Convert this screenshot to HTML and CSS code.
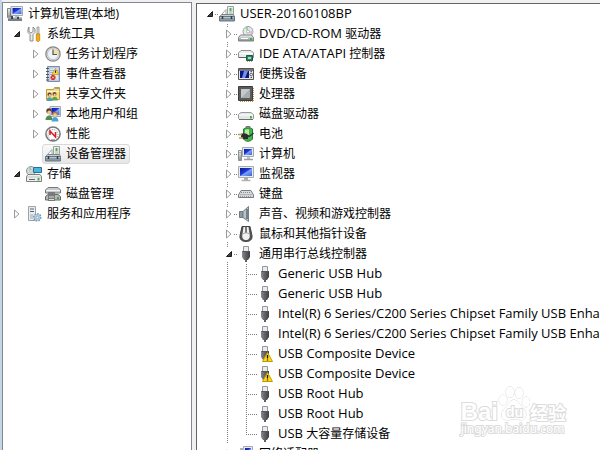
FILE: index.html
```html
<!DOCTYPE html>
<html lang="zh-CN">
<head>
    <meta charset="UTF-8">
    <meta name="viewport" content="width=device-width, initial-scale=1.0">
    <title>计算机管理</title>
    <link rel="stylesheet" href="styles.css">
</head>
<body>
    <!-- icon set -->
    <svg class="sprites" aria-hidden="true">
        <defs>
            <linearGradient id="steel" x1="0" y1="0" x2="0" y2="1">
                <stop offset="0" stop-color="#f4f6f6"/>
                <stop offset="1" stop-color="#858d91"/>
            </linearGradient>
            <linearGradient id="screen" x1="0" y1="0" x2="1" y2="1">
                <stop offset="0" stop-color="#0a1a9c"/>
                <stop offset=".45" stop-color="#2039d8"/>
                <stop offset=".55" stop-color="#7da4f2"/>
                <stop offset="1" stop-color="#3c5fe0"/>
            </linearGradient>
            <linearGradient id="plug" x1="0" y1="0" x2="1" y2="0">
                <stop offset="0" stop-color="#8b8b90"/>
                <stop offset=".4" stop-color="#66666b"/>
                <stop offset="1" stop-color="#3e3e42"/>
            </linearGradient>
        </defs>
        <symbol id="closed" viewBox="0 0 9 14">
            <path d="M2.5 3v8l4.500-4z" fill="#fff" stroke="#9a9a9a"/>
        </symbol>
        <symbol id="open" viewBox="0 0 9 14">
            <path d="M7.500 4.500v5h-5z" fill="#404040" stroke="#1c1c1c"/>
        </symbol>
        <symbol id="computer" viewBox="0 0 16 16">
            <path d="M4 .5h11.5v9H4z" fill="#e8eaee" stroke="#a5a9b2"/>
            <path d="M5.500 2h9v6h-9z" fill="url(#screen)"/>
            <path d="M8 10h4v1.500H8z" fill="#b8bcc2"/>
            <path d="M.5 2.500h3v9h-3z" fill="url(#steel)" stroke="#7b8287"/>
            <path d="M1 11.500h14v3.500H1z" fill="#777f84"/>
            <path d="M1 11.500h14v1H1z" fill="#c4cacc"/>
            <path d="M4 10h2v3H4zM10 11h2v2h-2z" fill="#41484c"/>
        </symbol>
        <symbol id="tools" viewBox="0 0 16 16">
            <path d="M3 1v4.500L5 7l2-1.500V1l2 2v3.500l-2 2V15H4V8.500l-2-2V3z" fill="#e8eaea" stroke="#777" stroke-width=".8"/>
            <path d="M11 1h2v7h-2z" fill="#ddd" stroke="#888" stroke-width=".7"/>
            <path d="M10.300 8h3.400v6.500l-1 1h-1.400l-1-1z" fill="#f5ab12" stroke="#b97c08" stroke-width=".7"/>
        </symbol>
        <symbol id="clock" viewBox="0 0 16 16">
            <circle cx="8" cy="8" r="7.200" fill="#ddd" stroke="#858585" stroke-width="1.200"/>
            <circle cx="8" cy="8" r="5.500" fill="#eef4fa" stroke="#aaa" stroke-width=".6"/>
            <path d="M8 8V2.500A5.500 5.500 0 0 1 13.500 8z" fill="#f4dfa8"/>
            <path d="M8 3.500V8.500h4" fill="none" stroke="#555" stroke-width="1.200"/>
        </symbol>
        <symbol id="events" viewBox="0 0 16 16">
            <path d="M2.500.5h12v15h-12z" fill="#b9cbe6" stroke="#7c8dac"/>
            <path d="M5 2.500h8v11H5z" fill="#dde6f4"/>
            <path d="M5 4.500h8M5 6.500h4M5 8.500h3" stroke="#8da2c6" stroke-width=".8"/>
            <path d="M1 2.500h3M1 5.500h3M1 8.500h3M1 11.500h3M1 14h3" stroke="#555"/>
            <path d="M10.500 2.500L14 8.500H7z" fill="#ffd52a" stroke="#b88c00" stroke-width=".6"/>
            <path d="M10.500 4.500v2.300" stroke="#222"/>
            <circle cx="8" cy="11.500" r="2.500" fill="#d2201c"/>
            <path d="M7 10.500l2 2m0-2l-2 2" stroke="#fff" stroke-width=".8"/>
        </symbol>
        <symbol id="shared" viewBox="0 0 16 16">
            <path d="M1.500 3.500h7l1-2h5v12h-13z" fill="#f6dc84" stroke="#c49b3a"/>
            <path d="M2 5.500h12.500" stroke="#fff4c2"/>
            <path d="M10 2.500h4" stroke="#6bb2d8"/>
            <circle cx="4.500" cy="8.500" r="2" fill="#5b4334"/>
            <circle cx="9.500" cy="8" r="2" fill="#6a4c36"/>
            <path d="M1.500 15c0-5 6-5 6 0z" fill="#4f9fb5"/>
            <path d="M6.800 14.500c0-5 6-5 6 0z" fill="#5da257"/>
            <circle cx="4.800" cy="9.300" r="1.200" fill="#efc4a0"/>
            <circle cx="9.700" cy="8.900" r="1.200" fill="#efc4a0"/>
        </symbol>
        <symbol id="users" viewBox="0 0 16 16">
            <path d="M5 .5h10.500v10H5z" fill="#dfe2e8" stroke="#a5a9b2"/>
            <path d="M6.500 2h8v7h-8z" fill="url(#screen)"/>
            <path d="M.5 14c0-6 7-6 7 0z" fill="#4f8f4c"/>
            <path d="M6.500 15.500c0-6 7-6 7 0z" fill="#4ba3d2"/>
            <circle cx="4" cy="5" r="2.700" fill="#5a3d24"/>
            <circle cx="4.300" cy="6.500" r="2" fill="#eec39c"/>
            <circle cx="10" cy="8" r="2.600" fill="#b57b35"/>
            <circle cx="10" cy="9.200" r="1.900" fill="#f0c9a5"/>
        </symbol>
        <symbol id="gauge" viewBox="0 0 16 16">
            <circle cx="8" cy="8" r="7.100" fill="#fff" stroke="#777" stroke-width="1.500"/>
            <path d="M4 11.500A5 5 0 1 1 12 11.500" fill="none" stroke="#888" stroke-dasharray="1 1"/>
            <path d="M5 9V5l5.500 6V6" fill="none" stroke="#d8202a" stroke-width="1.600"/>
            <path d="M6 14h4" stroke="#666"/>
        </symbol>
        <symbol id="devices" viewBox="0 0 16 16">
            <path d="M8.500 9V.5h6V9" fill="#eef0ef" stroke="#9ba1a3"/>
            <path d="M10 2h3.500v7H10z" fill="#c8d2ca"/>
            <path d="M11.500 2v3" stroke="#3db43a" stroke-width="1.500"/>
            <path d="M3 8l4-4.500V9" fill="#fff" stroke="#a0a6a9"/>
            <path d="M2.500 8.500h12l1 2.500H.500z" fill="#c9ced1" stroke="#7b858b"/>
            <path d="M.5 10.500h15v4.500H.5z" fill="#8799a5" stroke="#667682"/>
            <path d="M1 11h14v1H1z" fill="#b8c5cd"/>
            <path d="M3.500 10v3M12.500 10v3" stroke="#303a40" stroke-width="1.500"/>
        </symbol>
        <symbol id="storage" viewBox="0 0 16 16">
            <circle cx="5" cy="5" r="4.500" fill="#d5dddb" stroke="#8e9693"/>
            <path d="M5 5L2 1.500A4.500 4.500 0 0 1 5 .5z" fill="#9dd0a9"/>
            <circle cx="5" cy="5" r="1.300" fill="#fff" stroke="#999" stroke-width=".6"/>
            <path d="M7.500 1.500h8v5h-8z" fill="#4bb5e2" stroke="#2b708f"/>
            <path d="M2 8.500h12l1.500 2v5H.500v-5z" fill="#edf0ef" stroke="#7a8080"/>
            <path d="M1 11h14" stroke="#bcc2c2"/>
            <path d="M3 13.500h6" stroke="#666"/>
            <path d="M11.500 12h2v2.500h-2z" fill="#36b52c"/>
        </symbol>
        <symbol id="diskmgmt" viewBox="0 0 16 16">
            <path d="M3 1.500h10l2.500 2.500v3H.5V4z" fill="#c8cbcb" stroke="#777"/>
            <path d="M1 4.500h14" stroke="#f2f2f2"/>
            <path d="M3 8h10v2H3z" fill="#4b4e4e"/>
            <path d="M3 8.500h10l2.500 2v3.500H.5v-3.500z" fill="#b4b8b8" stroke="#666"/>
            <path d="M3 6h7v9H3z" fill="#777b7b"/>
            <path d="M4 10.500h5v1H4zM4 13h5v1H4z" fill="#ddd"/>
            <path d="M12 11h2v2h-2z" fill="#36b52c"/>
        </symbol>
        <symbol id="services" viewBox="0 0 16 16">
            <path d="M2.500.5h7v14h-7z" fill="#e9edf0" stroke="#9aa3aa"/>
            <path d="M4 3h4M4 5.500h4" stroke="#59646c"/>
            <path d="M4 8h3v5H4z" fill="#c4cbd0"/>
            <circle cx="11.300" cy="11.300" r="3.300" fill="#a9c6de" stroke="#7b9cb7" stroke-width="2" stroke-dasharray="1.500 1"/>
            <circle cx="11.300" cy="11.300" r="2.700" fill="#b7d1e5"/>
            <circle cx="11.300" cy="11.300" r="1.200" fill="#fff" stroke="#6286a3" stroke-width=".6"/>
        </symbol>
        <symbol id="dvd" viewBox="0 0 16 16">
            <circle cx="10" cy="5.500" r="5" fill="#e6e9e9" stroke="#9ca1a1"/>
            <path d="M10 5.500L7 1.500A5 5 0 0 1 10 .5z" fill="#8fd4a0"/>
            <path d="M10 5.500L14 8.500A5 5 0 0 0 15 5z" fill="#d7b8d8"/>
            <circle cx="10" cy="5.500" r="1.500" fill="#fff" stroke="#999" stroke-width=".7"/>
            <path d="M2.500 9h11l2 2.500v3.500H.5v-3.500z" fill="url(#steel)" stroke="#7c8181"/>
            <path d="M3 12.500h7" stroke="#fff"/>
            <path d="M12 12h2v2h-2z" fill="#36b52c"/>
        </symbol>
        <symbol id="ide" viewBox="0 0 16 16">
            <path d="M3 4.500h10l2.500 2.500v4.500H.5V7z" fill="#e9ecec" stroke="#8a9090"/>
            <path d="M1 7.500h14" stroke="#fff"/>
            <path d="M1 11.500h9" stroke="#5d6262"/>
            <path d="M8.500 9.500h6v5h-6z" fill="#2c8468" stroke="#195945"/>
            <path d="M10 11h3v2h-3z" fill="#a9d9c3"/>
            <path d="M9 15.500h6" stroke="#d4aa3b" stroke-dasharray="1 1"/>
        </symbol>
        <symbol id="portable" viewBox="0 0 16 16">
            <path d="M.5 2.500h15v11H.5z" fill="#e7e7e7" stroke="#555"/>
            <path d="M1 3h14v2H1z" fill="#77797c"/>
            <path d="M2 5h9v7H2z" fill="#0c1580"/>
            <path d="M6 5h4l-3 7H4z" fill="#6c94ed"/>
            <circle cx="13.200" cy="8.500" r="1.300" fill="#fff" stroke="#333" stroke-width=".8"/>
            <path d="M12.500 5.500h1.500M12.500 11.500h1.500" stroke="#555"/>
        </symbol>
        <symbol id="cpu" viewBox="0 0 16 16">
            <path d="M2 15.500h13M15.500 2v13" stroke="#c49640" stroke-dasharray="1 1"/>
            <path d="M.5.5h14v14H.5z" fill="#595b5c" stroke="#3c3e3f"/>
            <path d="M3 3h9v9H3z" fill="#c5c9ca"/>
            <path d="M3 12l9-9v9z" fill="#a8adaf"/>
        </symbol>
        <symbol id="disk" viewBox="0 0 16 16">
            <path d="M3 6.500h10l2.500 2v4l-1 1h-13l-1-1v-4z" fill="#e4e7e7" stroke="#979c9c"/>
            <path d="M1 9h14" stroke="#fff"/>
            <path d="M1 13.500h14" stroke="#696e6e"/>
            <path d="M12 10h1.800v2.500H12z" fill="#36b52c"/>
        </symbol>
        <symbol id="battery" viewBox="0 0 16 16">
            <path d="M8 .5h4v2H8z" fill="#bbb" stroke="#777"/>
            <path d="M5.500 3c2-1.500 7-1.500 9 0v10c-2 3-7 3-9 0z" fill="#45b549" stroke="#267c2c"/>
            <path d="M7 4c1-1 3-1 4-.5v9H7z" fill="#b7ecac"/>
            <path d="M3 7.500l5 0 3 2-1 3.500-5 0-2-2z" fill="#2c2c2c"/>
            <path d="M0 8.500h4M1 12h4" stroke="#b59b61" stroke-width="1.300"/>
            <path d="M10 10.500c2 0 3-1 5.500-3.500" fill="none" stroke="#333" stroke-width="1.500"/>
        </symbol>
        <symbol id="pc" viewBox="0 0 16 16">
            <path d="M4.500 1.500h11v9h-11z" fill="#e7eaee" stroke="#a4a8b0"/>
            <path d="M6 3h8v6H6z" fill="url(#screen)"/>
            <path d="M9 11h3v2H9z" fill="#c2c6ca"/>
            <path d="M6 13.500h9" stroke="#9b9fa4" stroke-width="1.500"/>
            <path d="M.5 4.500h3v10h-3z" fill="url(#steel)" stroke="#8b9194"/>
            <path d="M1.500 6.500h1" stroke="#36b52c"/>
        </symbol>
        <symbol id="monitor" viewBox="0 0 16 16">
            <path d="M.5.5h15v11H.5z" fill="#e9ebef" stroke="#a9adb3"/>
            <path d="M2 2h12v8H2z" fill="url(#screen)"/>
            <path d="M6 12h4v2H6z" fill="#a9adb2"/>
            <path d="M3.500 14.500h9" stroke="#b0b4b9" stroke-width="1.500"/>
        </symbol>
        <symbol id="keyboard" viewBox="0 0 16 16">
            <path d="M3 4.500h10L15.500 9v2.500H.5V9z" fill="#d9dcdf" stroke="#777d82"/>
            <path d="M3 6.500h10M2.500 8.500h11M2 10.300h12" stroke="#858b90" stroke-dasharray="1 1"/>
        </symbol>
        <symbol id="speaker" viewBox="0 0 16 16">
            <path d="M1.500 5.500H5v6H1.500z" fill="#8f999f" stroke="#6d777d"/>
            <path d="M5 5.500L10.500.5v15L5 11.500z" fill="#b9c3c8" stroke="#74808a"/>
            <path d="M9 3v10" stroke="#5d6b74" stroke-width="1.500"/>
        </symbol>
        <symbol id="mouse" viewBox="0 0 16 16">
            <path d="M4 .5h8l2 9c.5 4-2 6-6 6s-6.500-2-6-6z" fill="#555" stroke="#444"/>
            <path d="M5.500 1h5l1 7c1 4-1 6-3.500 6s-4.500-2-3.500-6z" fill="#f0f0f0"/>
            <path d="M8 1v6" stroke="#555" stroke-width="1.500"/>
            <path d="M4.500 8c2-1.500 5-1.500 7 0" fill="none" stroke="#aaa"/>
        </symbol>
        <symbol id="usb" viewBox="0 0 16 16">
            <path d="M5.500.5h5v5h-5z" fill="#e9ecf0" stroke="#93979c"/>
            <path d="M4 5h8v6l-2 3H9v2H7v-2H6l-2-3z" fill="url(#plug)"/>
            <path d="M4.500 5.500h7" stroke="#55555a"/>
        </symbol>
        <symbol id="usb-warning" viewBox="0 0 16 16">
            <use href="#usb"/>
            <path d="M10.500 6.500l5 9H5.500z" fill="#ffd91f" stroke="#c59b00" stroke-linejoin="round"/>
            <path d="M10.500 9v3.500M10.500 13.500v1" stroke="#111" stroke-width="1.300"/>
        </symbol>
        <symbol id="network" viewBox="0 0 16 16">
            <path d="M5.500.5h9v9h-9z" fill="#e7eaee" stroke="#a4a8b0"/>
            <path d="M7 2h6v6H7z" fill="url(#screen)"/>
            <path d="M2 2h4v8H2z" fill="#aeb5ba"/>
        </symbol>
    </svg>

    <main class="window">
        <nav class="pane console">
            <div class="row"><span class="label"><svg class="icon"><use href="#computer"/></svg>计算机管理(本地)</span></div>
            <ul>
                <li>
                    <div class="row"><button class="toggle" aria-label="折叠"><svg><use href="#open"/></svg></button><span class="label"><svg class="icon"><use href="#tools"/></svg>系统工具</span></div>
                    <ul class="sub">
                        <li class="row"><button class="toggle" aria-label="展开"><svg><use href="#closed"/></svg></button><span class="label"><svg class="icon"><use href="#clock"/></svg>任务计划程序</span></li>
                        <li class="row"><button class="toggle" aria-label="展开"><svg><use href="#closed"/></svg></button><span class="label"><svg class="icon"><use href="#events"/></svg>事件查看器</span></li>
                        <li class="row"><button class="toggle" aria-label="展开"><svg><use href="#closed"/></svg></button><span class="label"><svg class="icon"><use href="#shared"/></svg>共享文件夹</span></li>
                        <li class="row"><button class="toggle" aria-label="展开"><svg><use href="#closed"/></svg></button><span class="label"><svg class="icon"><use href="#users"/></svg>本地用户和组</span></li>
                        <li class="row"><button class="toggle" aria-label="展开"><svg><use href="#closed"/></svg></button><span class="label"><svg class="icon"><use href="#gauge"/></svg>性能</span></li>
                        <li class="row"><span class="spacer"></span><span class="label selected"><svg class="icon"><use href="#devices"/></svg>设备管理器</span></li>
                    </ul>
                </li>
                <li>
                    <div class="row"><button class="toggle" aria-label="折叠"><svg><use href="#open"/></svg></button><span class="label"><svg class="icon"><use href="#storage"/></svg>存储</span></div>
                    <ul class="sub">
                        <li class="row"><span class="spacer"></span><span class="label"><svg class="icon"><use href="#diskmgmt"/></svg>磁盘管理</span></li>
                    </ul>
                </li>
                <li class="row"><button class="toggle" aria-label="展开"><svg><use href="#closed"/></svg></button><span class="label"><svg class="icon"><use href="#services"/></svg>服务和应用程序</span></li>
            </ul>
        </nav>

        <section class="pane manager">
            <div class="row root"><button class="toggle" aria-label="折叠"><svg><use href="#open"/></svg></button><span class="label"><svg class="icon"><use href="#devices"/></svg><span class="latin">USER-20160108BP</span></span></div>
            <ul class="sub lines">
                <li><div class="row"><button class="toggle" aria-label="展开"><svg><use href="#closed"/></svg></button><span class="label"><svg class="icon"><use href="#dvd"/></svg><span><span class="latin">DVD/CD-ROM</span> 驱动器</span></span></div></li>
                <li><div class="row"><button class="toggle" aria-label="展开"><svg><use href="#closed"/></svg></button><span class="label"><svg class="icon"><use href="#ide"/></svg><span><span class="latin">IDE ATA/ATAPI</span> 控制器</span></span></div></li>
                <li><div class="row"><button class="toggle" aria-label="展开"><svg><use href="#closed"/></svg></button><span class="label"><svg class="icon"><use href="#portable"/></svg>便携设备</span></div></li>
                <li><div class="row"><button class="toggle" aria-label="展开"><svg><use href="#closed"/></svg></button><span class="label"><svg class="icon"><use href="#cpu"/></svg>处理器</span></div></li>
                <li><div class="row"><button class="toggle" aria-label="展开"><svg><use href="#closed"/></svg></button><span class="label"><svg class="icon"><use href="#disk"/></svg>磁盘驱动器</span></div></li>
                <li><div class="row"><button class="toggle" aria-label="展开"><svg><use href="#closed"/></svg></button><span class="label"><svg class="icon"><use href="#battery"/></svg>电池</span></div></li>
                <li><div class="row"><button class="toggle" aria-label="展开"><svg><use href="#closed"/></svg></button><span class="label"><svg class="icon"><use href="#pc"/></svg>计算机</span></div></li>
                <li><div class="row"><button class="toggle" aria-label="展开"><svg><use href="#closed"/></svg></button><span class="label"><svg class="icon"><use href="#monitor"/></svg>监视器</span></div></li>
                <li><div class="row"><button class="toggle" aria-label="展开"><svg><use href="#closed"/></svg></button><span class="label"><svg class="icon"><use href="#keyboard"/></svg>键盘</span></div></li>
                <li><div class="row"><button class="toggle" aria-label="展开"><svg><use href="#closed"/></svg></button><span class="label"><svg class="icon"><use href="#speaker"/></svg>声音、视频和游戏控制器</span></div></li>
                <li><div class="row"><button class="toggle" aria-label="展开"><svg><use href="#closed"/></svg></button><span class="label"><svg class="icon"><use href="#mouse"/></svg>鼠标和其他指针设备</span></div></li>
                <li>
                    <div class="row"><button class="toggle" aria-label="折叠"><svg><use href="#open"/></svg></button><span class="label"><svg class="icon"><use href="#usb"/></svg>通用串行总线控制器</span></div>
                    <ul class="sub">
                        <li class="row"><span class="branch"></span><span class="label"><svg class="icon"><use href="#usb"/></svg><span class="latin">Generic USB Hub</span></span></li>
                        <li class="row"><span class="branch"></span><span class="label"><svg class="icon"><use href="#usb"/></svg><span class="latin">Generic USB Hub</span></span></li>
                        <li class="row"><span class="branch"></span><span class="label"><svg class="icon"><use href="#usb"/></svg><span class="latin">Intel(R) 6 Series/C200 Series Chipset Family USB Enhanced Host Controller</span></span></li>
                        <li class="row"><span class="branch"></span><span class="label"><svg class="icon"><use href="#usb"/></svg><span class="latin">Intel(R) 6 Series/C200 Series Chipset Family USB Enhanced Host Controller</span></span></li>
                        <li class="row"><span class="branch"></span><span class="label"><svg class="icon"><use href="#usb-warning"/></svg><span class="latin">USB Composite Device</span></span></li>
                        <li class="row"><span class="branch"></span><span class="label"><svg class="icon"><use href="#usb-warning"/></svg><span class="latin">USB Composite Device</span></span></li>
                        <li class="row"><span class="branch"></span><span class="label"><svg class="icon"><use href="#usb"/></svg><span class="latin">USB Root Hub</span></span></li>
                        <li class="row"><span class="branch"></span><span class="label"><svg class="icon"><use href="#usb"/></svg><span class="latin">USB Root Hub</span></span></li>
                        <li class="row"><span class="branch"></span><span class="label"><svg class="icon"><use href="#usb"/></svg><span><span class="latin">USB</span> 大容量存储设备</span></span></li>
                    </ul>
                </li>
                <li><div class="row"><button class="toggle" aria-label="展开"><svg><use href="#closed"/></svg></button><span class="label"><svg class="icon"><use href="#network"/></svg>网络适配器</span></div></li>
            </ul>
        </section>
    </main>

    <div class="watermark">
        <div class="brand">
            <span class="bai">Bai</span>
            <span class="paw">
                <svg viewBox="0 0 32 36">
                    <g fill="#fff" stroke="#d9d9d9">
                        <ellipse cx="5" cy="14" rx="4" ry="5"/>
                        <ellipse cx="12" cy="6" rx="4" ry="5.500"/>
                        <ellipse cx="21" cy="7" rx="4" ry="5.500"/>
                        <ellipse cx="28" cy="16" rx="3.800" ry="5"/>
                        <path d="M16 14c4 0 5 4 8 7 5 4 6 13-1 13-3 0-5-1-7-1s-4 1-7 1c-8 0-6-9-1-13 3-3 4-7 8-7z"/>
                    </g>
                </svg>
                <span class="du">du</span>
            </span>
            <span class="jingyan">经验</span>
        </div>
        <div class="site">jingyan.baidu.com</div>
    </div>
</body>
</html>
```
FILE: styles.css
```css
* {
    box-sizing: border-box;
}
body {
    margin: 0;
    height: 100vh;
    overflow: hidden;
    background: #f0f0f0;
    color: #000;
    font: 12px/20px "Open Sans", "Noto Sans CJK SC", sans-serif;
}
.sprites {
    position: absolute;
    width: 0;
    height: 0;
}
.window {
    display: flex;
    gap: 4px;
    height: 100vh;
    padding-top: 2px;
    border-left: 2px solid #c3d5e6;
}
.pane {
    background: #fff;
    overflow: hidden;
    white-space: nowrap;
}
.console {
    flex: 0 0 190px;
    padding: 1px 4px;
    border: 1px solid #828790;
    border-bottom: 0;
}
.manager {
    flex: 1;
    min-width: 0;
    padding: 0 3px;
    margin-top: 1px;
    border-top: 1px solid #646464;
    border-left: 1px solid #646464;
}
ul {
    margin: 0;
    padding: 0;
    list-style: none;
}
.sub {
    padding-left: 19px;
}
.row {
    display: flex;
    align-items: center;
    height: 20px;
}
.toggle,
.spacer,
.branch {
    flex: 0 0 19px;
    height: 20px;
}
.toggle {
    display: flex;
    align-items: center;
    justify-content: center;
    padding: 0;
    border: 0;
    background: none;
}
.toggle svg {
    width: 9px;
    height: 14px;
    background: #fff;
}
.label {
    display: flex;
    align-items: center;
    gap: 5px;
}
.icon {
    flex: none;
    width: 16px;
    height: 16px;
}
.latin {
    font-size: 13px;
    line-height: 18px;
}
.label > .latin {
    padding-bottom: 2px;
}
.selected {
    height: 20px;
    margin: 0 -3px;
    padding: 0 3px 0 2px;
    border: 1px solid #d9d9d9;
    border-radius: 3px;
    background: linear-gradient(#fafafa, #e6e6e6);
}

/* dotted tree lines */
.lines > li {
    background: repeating-linear-gradient(#808080 0 1px, transparent 1px 2px) 8px 0 / 1px 100% no-repeat;
}
.lines > li:last-child {
    background: none;
}
.root,
.lines > li > .row {
    background: repeating-linear-gradient(90deg, #808080 0 1px, transparent 1px 2px) 15px 10px / 4px 1px no-repeat;
}
.branch {
    background:
        repeating-linear-gradient(#808080 0 1px, transparent 1px 2px) 8px 0 / 1px 100% no-repeat,
        repeating-linear-gradient(90deg, #808080 0 1px, transparent 1px 2px) 8px 10px / 11px 1px no-repeat;
}
.row:last-child > .branch {
    background-size: 1px 50%, 11px 1px;
}

.watermark {
    position: absolute;
    right: 34px;
    bottom: 14px;
    color: #fff;
    -webkit-text-stroke: 2px #dcdcdc;
    paint-order: stroke fill;
}
.brand {
    display: flex;
    align-items: flex-end;
    height: 36px;
}
.bai {
    font: bold 24px/20px "Liberation Sans", sans-serif;
}
.paw {
    position: relative;
    width: 32px;
    height: 36px;
}
.paw svg {
    display: block;
    width: 32px;
    height: 36px;
}
.du {
    position: absolute;
    left: 8px;
    bottom: 2px;
    font: bold 14px/16px "Liberation Sans", sans-serif;
}
.jingyan {
    font: bold 18px/20px "Noto Sans CJK SC", sans-serif;
}
.site {
    font: 12px/14px "Noto Sans", sans-serif;
}
```
